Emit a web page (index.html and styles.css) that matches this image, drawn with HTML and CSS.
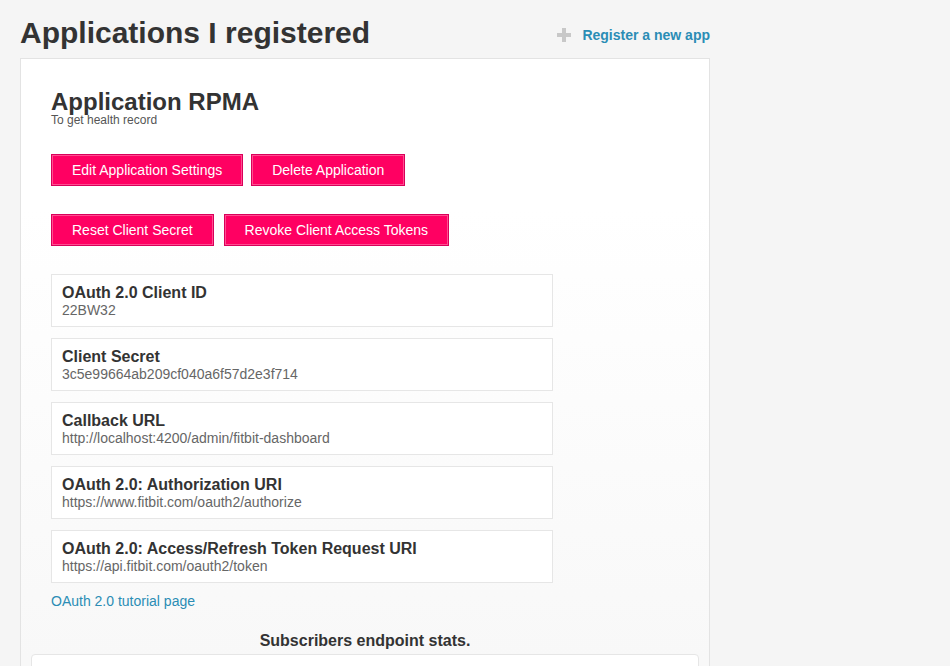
FILE: index.html
```html
<!DOCTYPE html>
<html>
<head>
<meta charset="utf-8">
<link rel="stylesheet" href="styles.css">
</head>
<body>
<div class="page">
  <div class="header">
    <h1 class="title">Applications I registered</h1>
    <a class="register" href="#">
      <svg class="plus" width="14" height="14" viewBox="0 0 14 14"><rect x="5" y="0" width="4" height="14" fill="#c8c8c8"/><rect x="0" y="5" width="14" height="4" fill="#c8c8c8"/></svg>
      <span>Register a new app</span>
    </a>
  </div>
  <div class="card">
    <div class="app">
      <h2 class="app-name">Application RPMA</h2>
      <div class="app-desc">To get health record</div>
      <div class="btn-row">
        <button class="btn">Edit Application Settings</button>
        <button class="btn">Delete Application</button>
      </div>
      <div class="btn-row row2">
        <button class="btn">Reset Client Secret</button>
        <button class="btn">Revoke Client Access Tokens</button>
      </div>
      <div class="fields">
        <div class="field"><div class="f-label">OAuth 2.0 Client ID</div><div class="f-value">22BW32</div></div>
        <div class="field"><div class="f-label">Client Secret</div><div class="f-value">3c5e99664ab209cf040a6f57d2e3f714</div></div>
        <div class="field"><div class="f-label">Callback URL</div><div class="f-value">http://localhost:4200/admin/fitbit-dashboard</div></div>
        <div class="field"><div class="f-label">OAuth 2.0: Authorization URI</div><div class="f-value">https://www.fitbit.com/oauth2/authorize</div></div>
        <div class="field"><div class="f-label">OAuth 2.0: Access/Refresh Token Request URI</div><div class="f-value">https://api.fitbit.com/oauth2/token</div></div>
      </div>
      <a class="tutorial" href="#">OAuth 2.0 tutorial page</a>
    </div>
    <h3 class="stats-title">Subscribers endpoint stats.</h3>
    <div class="stats-box"></div>
  </div>
</div>
</body>
</html>
```
FILE: styles.css
```css
html, body {
  margin: 0;
  padding: 0;
  background: #f5f5f5;
  font-family: "Liberation Sans", Arial, sans-serif;
  color: #333;
  overflow: hidden;
}
.page {
  padding: 15px 0 0 20px;
  width: 690px;
}
.header {
  display: flex;
  align-items: flex-start;
  justify-content: space-between;
  height: 43px;
}
.title {
  margin: 0;
  font-size: 30px;
  line-height: 36px;
  font-weight: bold;
  color: #333;
}
.register {
  display: flex;
  align-items: center;
  gap: 11px;
  margin-top: 12px;
  text-decoration: none;
  color: #2b8db5;
  font-size: 14px;
  font-weight: bold;
}
.plus { display: block; }
.card {
  border: 1px solid #e3e3e3;
  background: linear-gradient(#ffffff 0px, #ffffff 150px, #f8f8f8 600px);
  padding: 0 10px;
  height: 640px;
}
.app {
  padding: 30px 20px 0 20px;
}
.app-name {
  margin: 0;
  font-size: 24px;
  line-height: 25px;
  font-weight: bold;
  color: #333;
}
.app-desc {
  font-size: 12px;
  line-height: 12px;
  color: #555;
}
.btn-row {
  display: flex;
  gap: 8px;
  margin-top: 28px;
}
.row2 { gap: 10px; margin-top: 28px; }
.btn {
  font-family: "Liberation Sans", Arial, sans-serif;
  font-size: 14px;
  color: #fff;
  background: #ff0062;
  border: 1px solid #d9005a;
  box-shadow: inset 0 0 0 1px #ff4d90;
  height: 32px;
  padding: 0 20px;
  margin: 0;
}
.fields {
  width: 502px;
  margin-top: 28px;
  display: flex;
  flex-direction: column;
  gap: 11px;
}
.field {
  border: 1px solid #e6e6e6;
  background: #fff;
  height: 51px;
  box-sizing: content-box;
  padding: 0 10px;
}
.f-label {
  font-size: 16px;
  font-weight: bold;
  line-height: 18px;
  margin-top: 9px;
  color: #333;
}
.f-value {
  font-size: 14px;
  line-height: 16px;
  color: #666;
}
.tutorial {
  display: block;
  margin-top: 10px;
  font-size: 14px;
  color: #2b8db5;
  text-decoration: none;
}
.stats-title {
  margin: 23px 0 0 0;
  text-align: center;
  font-size: 16px;
  line-height: 18px;
  font-weight: bold;
  color: #333;
}
.stats-box {
  margin-top: 4px;
  height: 60px;
  background: #fff;
  border: 1px solid #e6e6e6;
  border-radius: 4px;
}
```
